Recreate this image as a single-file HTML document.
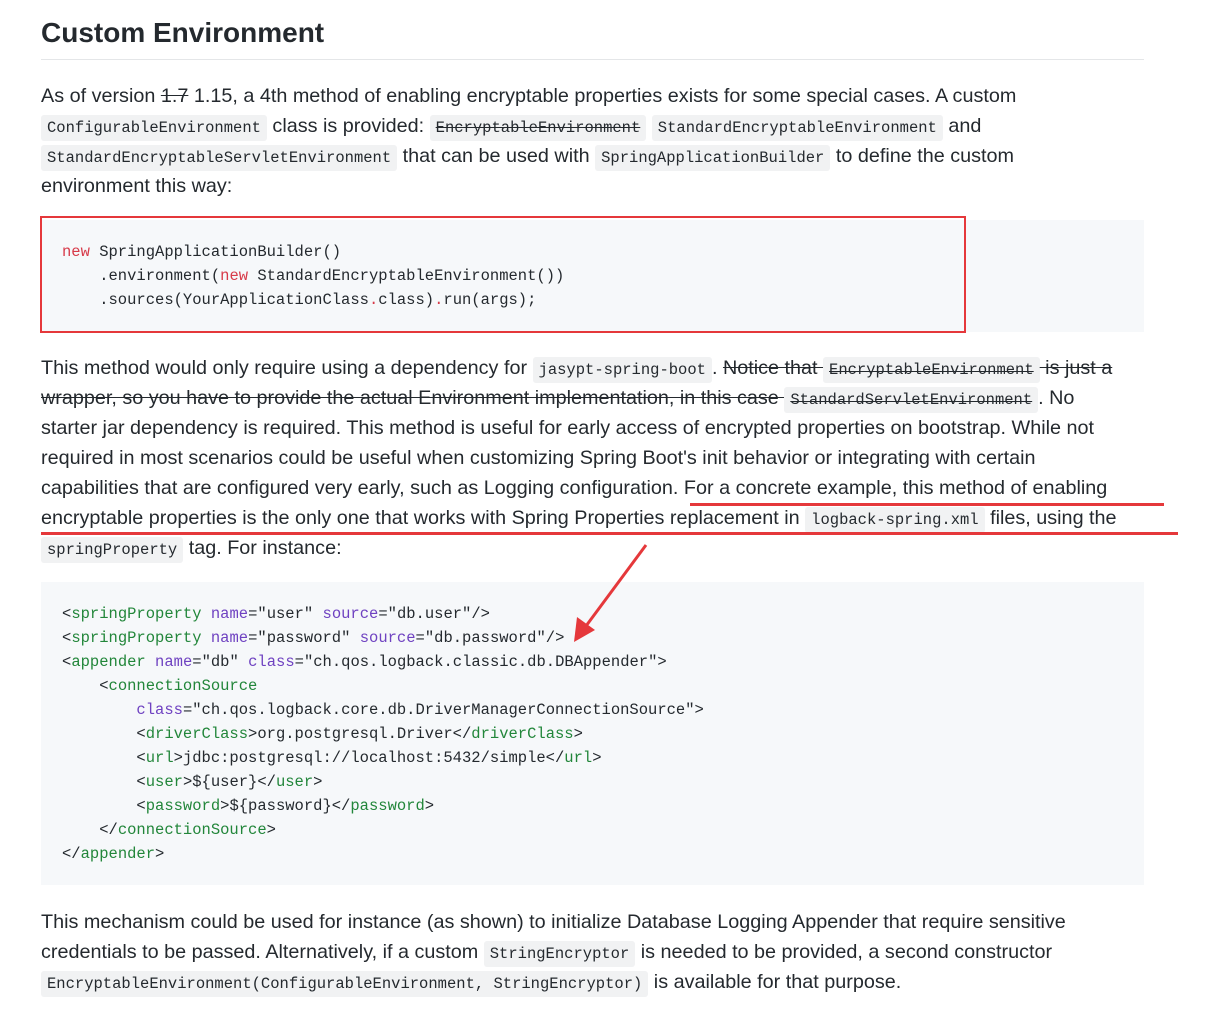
<!DOCTYPE html>
<html><head><meta charset="utf-8"><style>
body{margin:0;background:#fff;color:#24292e;font-family:"Liberation Sans",sans-serif;width:1222px;height:1009px;overflow:hidden;position:relative}
h2{position:absolute;left:41px;top:14px;margin:0;font-size:28px;font-weight:600;line-height:38px}
.hr{position:absolute;left:41px;top:59px;width:1103px;height:1px;background:#e4e6e8}
.l{position:absolute;left:41px;height:30px;line-height:30px;font-size:19.8px;white-space:nowrap}
code{font-family:"Liberation Mono",monospace;font-size:15.5px;background:#f1f2f3;padding:4px 6px;border-radius:3px}
s{text-decoration:line-through}
.pre{position:absolute;left:41px;width:1103px;background:#f6f8fa;font-family:"Liberation Mono",monospace;font-size:15.5px;line-height:24px;white-space:pre;box-sizing:border-box;padding-left:21px}
.k{color:#d73a49}.t{color:#22863a}.at{color:#6f42c1}.s{color:#24292e}
.red{position:absolute;background:#e5383b;z-index:5}
</style></head><body>
<h2>Custom Environment</h2>
<div class="hr"></div>
<div class="l" style="top:81px">As of version <s>1.7</s> 1.15, a 4th method of enabling encryptable properties exists for some special cases. A custom</div>
<div class="l" style="top:111px"><code>ConfigurableEnvironment</code> class is provided: <code><s>EncryptableEnvironment</s></code> <code>StandardEncryptableEnvironment</code> and</div>
<div class="l" style="top:141px"><code>StandardEncryptableServletEnvironment</code> that can be used with <code>SpringApplicationBuilder</code> to define the custom</div>
<div class="l" style="top:171px">environment this way:</div>
<div class="pre" style="top:220px;height:112px;padding-top:20px"><span class="k">new</span> SpringApplicationBuilder()
    .environment(<span class="k">new</span> StandardEncryptableEnvironment())
    .sources(YourApplicationClass<span class="k">.</span>class)<span class="k">.</span>run(args);</div>
<div style="position:absolute;left:40px;top:216px;width:922px;height:113px;border:2px solid #e5383b"></div>
<div class="l" style="top:353px">This method would only require using a dependency for <code>jasypt-spring-boot</code>. <s>Notice that <code>EncryptableEnvironment</code> is just a</s></div>
<div class="l" style="top:383px"><s>wrapper, so you have to provide the actual Environment implementation, in this case <code>StandardServletEnvironment</code></s>. No</div>
<div class="l" style="top:413px">starter jar dependency is required. This method is useful for early access of encrypted properties on bootstrap. While not</div>
<div class="l" style="top:443px">required in most scenarios could be useful when customizing Spring Boot's init behavior or integrating with certain</div>
<div class="l" style="top:473px">capabilities that are configured very early, such as Logging configuration. For a concrete example, this method of enabling</div>
<div class="l" style="top:503px">encryptable properties is the only one that works with Spring Properties replacement in <code>logback-spring.xml</code> files, using the</div>
<div class="l" style="top:533px"><code>springProperty</code> tag. For instance:</div>
<div class="red" style="left:690px;top:503px;width:474px;height:3px"></div>
<div class="red" style="left:41px;top:532px;width:1137px;height:3px"></div>
<div class="pre" style="top:582px;height:303px;padding-top:20px">&lt;<span class="t">springProperty</span> <span class="at">name</span>=<span class="s">"user"</span> <span class="at">source</span>=<span class="s">"db.user"</span>/&gt;
&lt;<span class="t">springProperty</span> <span class="at">name</span>=<span class="s">"password"</span> <span class="at">source</span>=<span class="s">"db.password"</span>/&gt;
&lt;<span class="t">appender</span> <span class="at">name</span>=<span class="s">"db"</span> <span class="at">class</span>=<span class="s">"ch.qos.logback.classic.db.DBAppender"</span>&gt;
    &lt;<span class="t">connectionSource</span>
        <span class="at">class</span>=<span class="s">"ch.qos.logback.core.db.DriverManagerConnectionSource"</span>&gt;
        &lt;<span class="t">driverClass</span>&gt;org.postgresql.Driver&lt;/<span class="t">driverClass</span>&gt;
        &lt;<span class="t">url</span>&gt;jdbc:postgresql://localhost:5432/simple&lt;/<span class="t">url</span>&gt;
        &lt;<span class="t">user</span>&gt;${user}&lt;/<span class="t">user</span>&gt;
        &lt;<span class="t">password</span>&gt;${password}&lt;/<span class="t">password</span>&gt;
    &lt;/<span class="t">connectionSource</span>&gt;
&lt;/<span class="t">appender</span>&gt;</div>
<svg style="position:absolute;left:560px;top:540px;z-index:6" width="100" height="110"><line x1="86" y1="5" x2="26" y2="86" stroke="#e5383b" stroke-width="3"/><polygon points="14,102 17,77 35,90" fill="#e5383b"/></svg>
<div class="l" style="top:907px">This mechanism could be used for instance (as shown) to initialize Database Logging Appender that require sensitive</div>
<div class="l" style="top:937px">credentials to be passed. Alternatively, if a custom <code>StringEncryptor</code> is needed to be provided, a second constructor</div>
<div class="l" style="top:967px"><code>EncryptableEnvironment(ConfigurableEnvironment, StringEncryptor)</code> is available for that purpose.</div>
</body></html>
